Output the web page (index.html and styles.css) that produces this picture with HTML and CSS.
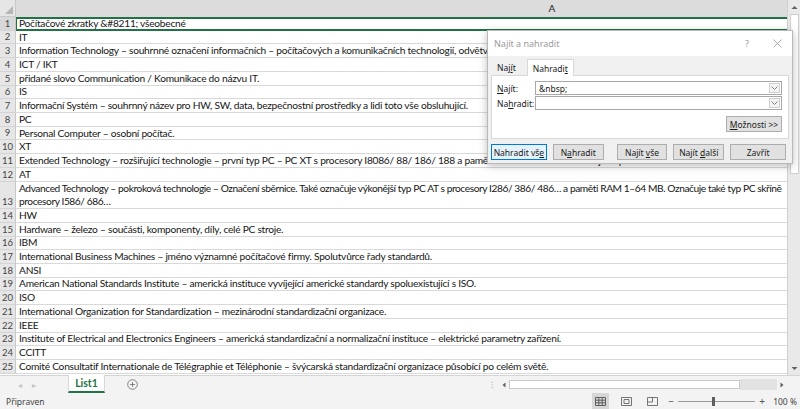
FILE: index.html
```html
<!DOCTYPE html>
<html lang="cs">
<head>
<meta charset="utf-8">
<title>Excel – Najít a nahradit</title>
<link rel="stylesheet" href="styles.css">
</head>
<body>
<div class="app">
  <div class="main">
    <div class="sheet">
      <div class="colhead">
        <div class="corner"><span class="tri"></span></div>
        <div class="colA">A</div>
      </div>
      <div class="rows">
        <div class="row sel"><div class="rh">1</div><div class="cell">Počítačové zkratky &amp;#8211; všeobecné</div></div>
        <div class="row"><div class="rh">2</div><div class="cell">IT</div></div>
        <div class="row"><div class="rh">3</div><div class="cell">Information Technology – souhrnné označení informačních – počítačových a komunikačních technologií, odvětví informatiky a výpočetní techniky.</div></div>
        <div class="row"><div class="rh">4</div><div class="cell">ICT / IKT</div></div>
        <div class="row"><div class="rh">5</div><div class="cell">přidané slovo Communication / Komunikace do názvu IT.</div></div>
        <div class="row"><div class="rh">6</div><div class="cell">IS</div></div>
        <div class="row"><div class="rh">7</div><div class="cell">Informační Systém – souhrnný název pro HW, SW, data, bezpečnostní prostředky a lidi toto vše obsluhující.</div></div>
        <div class="row"><div class="rh">8</div><div class="cell">PC</div></div>
        <div class="row"><div class="rh">9</div><div class="cell">Personal Computer – osobní počítač.</div></div>
        <div class="row"><div class="rh">10</div><div class="cell">XT</div></div>
        <div class="row"><div class="rh">11</div><div class="cell">Extended Technology – rozšiřující technologie – první typ PC – PC XT s procesory I8086/ 88/ 186/ 188 a pamětí RAM 16–640 KB. Dnes je nepoužitelné.</div></div>
        <div class="row"><div class="rh">12</div><div class="cell">AT</div></div>
        <div class="row tall"><div class="rh">13</div><div class="cell">Advanced Technology – pokroková technologie – Označení sběrnice. Také označuje výkonější typ PC AT s procesory I286/ 386/ 486… a paměti RAM 1–64 MB. Označuje také typ PC skříně<br>procesory I586/ 686…</div></div>
        <div class="row"><div class="rh">14</div><div class="cell">HW</div></div>
        <div class="row"><div class="rh">15</div><div class="cell">Hardware – železo – součásti, komponenty, díly, celé PC stroje.</div></div>
        <div class="row"><div class="rh">16</div><div class="cell">IBM</div></div>
        <div class="row"><div class="rh">17</div><div class="cell">International Business Machines – jméno významné počítačové firmy. Spolutvůrce řady standardů.</div></div>
        <div class="row"><div class="rh">18</div><div class="cell">ANSI</div></div>
        <div class="row"><div class="rh">19</div><div class="cell">American National Standards Institute – americká instituce vyvíjející americké standardy spoluexistující s ISO.</div></div>
        <div class="row"><div class="rh">20</div><div class="cell">ISO</div></div>
        <div class="row"><div class="rh">21</div><div class="cell">International Organization for Standardization – mezinárodní standardizační organizace.</div></div>
        <div class="row"><div class="rh">22</div><div class="cell">IEEE</div></div>
        <div class="row"><div class="rh">23</div><div class="cell">Institute of Electrical and Electronics Engineers – americká standardizační a normalizační instituce – elektrické parametry zařízení.</div></div>
        <div class="row"><div class="rh">24</div><div class="cell">CCITT</div></div>
        <div class="row"><div class="rh">25</div><div class="cell">Comité Consultatif Internationale de Télégraphie et Téléphonie – švýcarská standardizační organizace působící po celém světě.</div></div>
      </div>
    </div>
    <div class="vscroll">
      <div class="sarrow">
        <svg width="7" height="5" viewBox="0 0 7 5"><path d="M0.5 4 L3.5 1 L6.5 4 Z" fill="#606060"/></svg>
      </div>
      <div class="vthumb"></div>
      <div class="vtrack"></div>
      <div class="sarrow">
        <svg width="7" height="5" viewBox="0 0 7 5"><path d="M0.5 1 L3.5 4 L6.5 1 Z" fill="#606060"/></svg>
      </div>
    </div>
  </div>

  <div class="tabbar">
    <div class="navs"><span class="nav">◂</span><span class="nav">▸</span></div>
    <div class="tab">List1</div>
    <div class="addsheet">
      <svg width="11" height="11" viewBox="0 0 11 11"><circle cx="5.5" cy="5.5" r="4.8" fill="none" stroke="#777" stroke-width="0.9"/><path d="M5.5 3 V8 M3 5.5 H8" stroke="#777" stroke-width="0.9"/></svg>
    </div>
    <div class="spacer"></div>
    <div class="split">⁝</div>
    <div class="hscroll">
      <div class="harrow"><svg width="4" height="6" viewBox="0 0 4 6"><path d="M3.5 0.5 L0.5 3 L3.5 5.5 Z" fill="#606060"/></svg></div>
      <div class="hthumb"></div>
      <div class="htrack"></div>
      <div class="harrow"><svg width="4" height="6" viewBox="0 0 4 6"><path d="M0.5 0.5 L3.5 3 L0.5 5.5 Z" fill="#606060"/></svg></div>
    </div>
    <div class="corner2"></div>
  </div>

  <div class="status">
    <div class="ready">Připraven</div>
    <div class="spacer"></div>
    <div class="views">
      <div class="view on">
        <svg width="11" height="9" viewBox="0 0 11 9"><path d="M0.5 0.5 H10.5 V8.5 H0.5 Z M0.5 3.2 H10.5 M0.5 5.8 H10.5 M3.8 0.5 V8.5 M7.2 0.5 V8.5" fill="none" stroke="#555" stroke-width="0.9"/></svg>
      </div>
      <div class="view">
        <svg width="11" height="9" viewBox="0 0 11 9"><path d="M0.5 0.5 H10.5 V8.5 H0.5 Z" fill="none" stroke="#666" stroke-width="0.9"/><path d="M3 2.5 H8 V6.5 H3 Z" fill="none" stroke="#666" stroke-width="0.9"/></svg>
      </div>
      <div class="view">
        <svg width="11" height="9" viewBox="0 0 11 9"><path d="M0.5 0.5 H10.5 V8.5 H0.5 Z M5.5 0.5 V5 H0.5" fill="none" stroke="#666" stroke-width="0.9"/></svg>
      </div>
    </div>
    <div class="zoom">
      <span class="zsign">−</span>
      <div class="slider"><div class="sthumb"></div></div>
      <span class="zsign">+</span>
      <span class="zval">100 %</span>
    </div>
  </div>

  <div class="dialog">
    <div class="dtitle">
      <span class="dname">Najít a nahradit</span>
      <span class="spacer"></span>
      <span class="dq">?</span>
      <span class="dx">
        <svg width="9" height="9" viewBox="0 0 9 9"><path d="M0.5 0.5 L8.5 8.5 M8.5 0.5 L0.5 8.5" stroke="#999" stroke-width="0.8"/></svg>
      </span>
    </div>
    <div class="tabs">
      <div class="dtab">Naj<u>í</u>t</div>
      <div class="dtab active">Nahradi<u>t</u></div>
    </div>
    <div class="panel">
      <div class="field">
        <label class="flabel"><u>N</u>ajít:</label>
        <div class="combo"><span class="cval">&amp;nbsp;</span><span class="drop"><svg width="7" height="4" viewBox="0 0 7 4"><path d="M0.5 0.5 L3.5 3.5 L6.5 0.5" fill="none" stroke="#777" stroke-width="0.9"/></svg></span></div>
      </div>
      <div class="field">
        <label class="flabel">Na<u>h</u>radit:</label>
        <div class="combo"><span class="cval"></span><span class="drop"><svg width="7" height="4" viewBox="0 0 7 4"><path d="M0.5 0.5 L3.5 3.5 L6.5 0.5" fill="none" stroke="#777" stroke-width="0.9"/></svg></span></div>
      </div>
      <div class="optrow"><button class="btn opt"><span><u>M</u>ožnosti &gt;&gt;</span></button></div>
    </div>
    <div class="buttons">
      <button class="btn wide focus"><span>Nahradit vš<u>e</u></span></button>
      <button class="btn"><span>N<u>a</u>hradit</span></button>
      <button class="btn far"><span>Najít <u>v</u>še</span></button>
      <button class="btn"><span>Najít <u>d</u>alší</span></button>
      <button class="btn wide"><span>Zavřít</span></button>
    </div>
  </div>
</div>
</body>
</html>
```

FILE: styles.css
```css
* { box-sizing: border-box; }
html, body { margin: 0; padding: 0; }
body {
  width: 800px;
  height: 409px;
  overflow: hidden;
  background: #ffffff;
  font-family: "Lato", "Liberation Sans", sans-serif;
}
.app {
  position: relative;
  width: 800px;
  height: 409px;
  display: flex;
  flex-direction: column;
  overflow: hidden;
}
.main {
  display: flex;
  height: 375px;
  flex: none;
}
.sheet {
  flex: 1;
  overflow: hidden;
  display: flex;
  flex-direction: column;
}
.colhead {
  display: flex;
  height: 17px;
  flex: none;
  background: #e6e6e6;
}
.corner {
  width: 16px;
  flex: none;
  border-right: 1px solid #c8c8c8;
  border-bottom: 1px solid #c8c8c8;
  position: relative;
}
.tri {
  position: absolute;
  right: 2px;
  bottom: 2px;
  width: 0;
  height: 0;
  border-left: 8px solid transparent;
  border-bottom: 8px solid #b5b5b5;
}
.colA {
  width: 1072px;
  flex: none;
  background: #dcdcdc;
  text-align: center;
  font-size: 10px;
  line-height: 17px;
  color: #262626;
}
.rows {
  display: flex;
  flex-direction: column;
}
.row {
  display: flex;
  height: 13.72px;
  flex: none;
}
.row.tall { height: 27.44px; }
.rh {
  width: 16px;
  flex: none;
  background: #e6e6e6;
  border-right: 1px solid #c8c8c8;
  border-bottom: 1px solid #d4d4d4;
  text-align: center;
  font-size: 9.5px;
  color: #444;
  display: flex;
  align-items: flex-end;
  justify-content: center;
  padding-bottom: 1px;
  line-height: 11px;
}
.cell {
  width: 1072px;
  flex: none;
  border-bottom: 1px solid #d9d9d9;
  font-size: 10.2px;
  letter-spacing: -0.25px;
  line-height: 12.9px;
  color: #161616;
  padding: 0 0 0 3px;
  white-space: nowrap;
  display: flex;
  align-items: flex-end;
}
.row.tall .cell { line-height: 13px; display: block; letter-spacing: -0.42px; }
.row.sel .rh { background: #d8d8d8; }
.row.sel .cell {
  border: 2px solid #217346;
  border-left-width: 1px;
  padding-left: 2px;
  align-items: center;
  overflow: visible;
}

.vscroll {
  width: 13px;
  flex: none;
  background: #e9e9e9;
  border-left: 1px solid #d0d0d0;
  display: flex;
  flex-direction: column;
  align-items: center;
}
.sarrow {
  height: 14px;
  width: 100%;
  display: flex;
  align-items: center;
  justify-content: center;
  flex: none;
}
.vthumb {
  width: 9px;
  height: 160px;
  background: #ffffff;
  border: 1px solid #cfcfcf;
  flex: none;
}
.vtrack { flex: 1; }

.tabbar {
  height: 18px;
  flex: none;
  display: flex;
  align-items: stretch;
  background: #f3f3f3;
  border-top: 1px solid #d4d4d4;
}
.navs {
  width: 68px;
  display: flex;
  padding-left: 18px;
  gap: 10px;
  align-items: center;
  font-size: 8px;
  color: #c4c4c4;
}
.tab {
  width: 37px;
  background: #ffffff;
  color: #217346;
  font-weight: bold;
  font-size: 10.5px;
  text-align: center;
  line-height: 16px;
  border-bottom: 2px solid #217346;
  border-left: 1px solid #d8d8d8;
  border-right: 1px solid #d8d8d8;
  margin-top: -1px;
}
.addsheet {
  width: 60px;
  display: flex;
  align-items: center;
  padding-left: 22px;
}
.spacer { flex: 1; }
.split {
  width: 14px;
  font-size: 9px;
  color: #b0b0b0;
  display: flex;
  align-items: center;
  justify-content: center;
}
.hscroll {
  width: 288px;
  display: flex;
  align-items: center;
  padding: 3px 0;
}
.harrow {
  width: 10px;
  height: 11px;
  display: flex;
  align-items: center;
  justify-content: center;
}
.hthumb {
  width: 231px;
  height: 9px;
  background: #fff;
  border: 1px solid #c9c9c9;
}
.htrack {
  flex: 1;
  height: 11px;
  background: #e2e2e2;
}
.corner2 { width: 13px; background: #f3f3f3; }

.status {
  flex: 1;
  display: flex;
  align-items: center;
  background: #f3f3f3;
  font-family: "Noto Sans", "Liberation Sans", sans-serif;
  font-size: 8.5px;
  color: #444;
}
.ready { padding-left: 6px; }
.views {
  display: flex;
  align-items: stretch;
  height: 100%;
  margin-right: 6px;
  gap: 9px;
}
.view {
  width: 17px;
  display: flex;
  align-items: center;
  justify-content: center;
}
.view.on { background: #d6d6d6; }
.zoom {
  display: flex;
  align-items: center;
  margin-right: 3px;
}
.zsign { font-size: 10px; color: #555; width: 8px; text-align: center; }
.slider {
  width: 77px;
  height: 1px;
  background: #9a9a9a;
  position: relative;
  margin: 0 3px;
}
.sthumb {
  position: absolute;
  left: 34px;
  top: -4px;
  width: 3px;
  height: 9px;
  background: #5f5f5f;
}
.zval { margin-left: 7px; font-size: 8.5px; }

/* dialog */
.dialog {
  position: absolute;
  left: 487px;
  top: 30px;
  width: 306px;
  height: 134px;
  background: #f0f0f0;
  border: 1px solid #b9b9b9;
  box-shadow: 0 2px 8px rgba(0,0,0,0.25);
  font-family: "Noto Sans", "Liberation Sans", sans-serif;
  font-size: 8.5px;
  color: #1a1a1a;
  display: flex;
  flex-direction: column;
}
.dtitle {
  height: 25px;
  flex: none;
  display: flex;
  align-items: center;
  padding: 0 10px 0 6px;
  background: #ffffff;
  color: #9a9a9a;
  font-size: 9px;
}
.dq { margin-right: 24px; font-size: 9px; color: #999; }
.dx { display: flex; align-items: center; }
.tabs {
  display: flex;
  align-items: flex-end;
  padding-left: 3px;
  height: 19px;
  flex: none;
}
.dtab {
  padding: 0 6px;
  height: 15px;
  line-height: 16px;
  position: relative;
}
.dtab.active {
  margin-left: 5px;
  padding: 0 5px;
  height: 17px;
  line-height: 18px;
  background: #ffffff;
  border: 1px solid #d9d9d9;
  border-bottom: none;
  margin-bottom: -1px;
  z-index: 1;
}
.panel {
  margin: 0 3px;
  height: 64px;
  flex: none;
  background: #ffffff;
  border: 1px solid #d9d9d9;
  padding: 5px 6px 0 5px;
  display: flex;
  flex-direction: column;
  gap: 1px;
}
.field {
  display: flex;
  align-items: center;
  height: 14px;
}
.flabel { width: 38px; }
.combo {
  flex: 1;
  height: 14px;
  border: 1px solid #a8a8a8;
  background: #fff;
  display: flex;
  align-items: center;
}
.cval { flex: 1; padding-left: 3px; }
.drop {
  width: 11px;
  height: 10px;
  margin-right: 1px;
  border: 1px solid #d0d0d0;
  background: #f4f4f4;
  display: flex;
  align-items: center;
  justify-content: center;
}
.optrow {
  display: flex;
  justify-content: flex-end;
  margin-top: 5px;
}
.btn {
  font-family: inherit;
  font-size: 8.5px;
  color: #1a1a1a;
  background: #e1e1e1;
  border: 1px solid #adadad;
  height: 16px;
  padding: 0;
  margin: 0;
  display: flex;
  align-items: center;
  justify-content: center;
  white-space: nowrap;
}
.btn.opt { width: 56px; }
.buttons {
  display: flex;
  align-items: center;
  padding: 0 6px 0 3px;
  margin-top: 5px;
  gap: 6px;
}
.buttons .btn { width: 51px; }
.buttons .btn.wide { width: 56px; }
.buttons .btn.far { margin-left: 7px; }
.buttons .btn.focus { background: #e5f1fb; border-color: #0078d7; }
u { text-decoration: underline; text-underline-offset: 1px; }
```
